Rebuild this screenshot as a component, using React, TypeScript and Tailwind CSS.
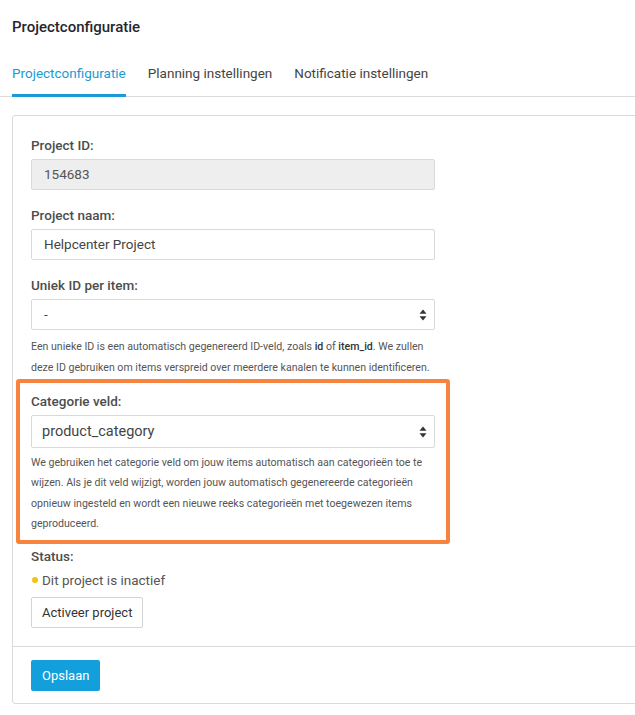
import { useState } from "react";

const tabs = ["Projectconfiguratie", "Planning instellingen", "Notificatie instellingen"];

function SortArrows() {
  return (
    <svg width="8" height="12" viewBox="0 0 8 12" className="shrink-0">
      <path d="M4 0.5 L7.5 4.8 H0.5 Z" fill="#333" />
      <path d="M4 11.5 L7.5 7.2 H0.5 Z" fill="#333" />
    </svg>
  );
}

interface SelectProps {
  value: string;
  large?: boolean;
}

function FakeSelect({ value, large }: SelectProps) {
  return (
    <div
      className={`flex items-center justify-between w-[404px] border border-[#d9d9d9] rounded-[2px] bg-white pr-[7px] ${
        large ? "h-[33px] text-[14.5px] pl-[10px]" : "h-[31px] text-[13.5px] pl-3"
      } text-[#444]`}
    >
      <span>{value}</span>
      <SortArrows />
    </div>
  );
}

function Label({ children }: { children: React.ReactNode }) {
  return (
    <div className="text-[13.5px] leading-[20px] font-medium text-[#4d4d4d] mb-[4px]">
      {children}
    </div>
  );
}

export default function App() {
  const [active, setActive] = useState(0);

  return (
    <div className="min-h-[715px] bg-white font-['Roboto',sans-serif] text-[#444] overflow-hidden">
      <h1 className="pl-3 pt-[17px] text-[15px] leading-[20px] font-medium text-[#26262e]">
        Projectconfiguratie
      </h1>

      <div className="mt-[26px] border-b border-[#dcdcdc] pl-3 flex gap-[22px]">
        {tabs.map((t, i) => (
          <button
            key={t}
            onClick={() => setActive(i)}
            className={`pb-[11px] text-[13.5px] leading-[20px] border-b-[3px] -mb-px ${
              active === i
                ? "text-[#1a9ad6] border-[#1a9ad6]"
                : "text-[#444] border-transparent"
            }`}
          >
            {t}
          </button>
        ))}
      </div>

      <div className="ml-3 mt-[18px] w-[640px] border border-[#dadada] rounded-[3px]">
        <div className="pl-[18px] pt-[19px] pb-[18px]">
          <Label>Project ID:</Label>
          <div className="w-[404px] h-[31px] flex items-center pl-3 border border-[#d9d9d9] rounded-[2px] bg-[#eeeeee] text-[13.5px] text-[#555]">
            154683
          </div>

          <div className="mt-[15px]">
            <Label>Project naam:</Label>
            <div className="w-[404px] h-[31px] flex items-center pl-3 border border-[#d9d9d9] rounded-[2px] bg-white text-[13.5px] text-[#444]">
              Helpcenter Project
            </div>
          </div>

          <div className="mt-[15px]">
            <Label>Uniek ID per item:</Label>
            <FakeSelect value="-" />
            <p className="mt-[6px] w-[404px] text-[10.6px] leading-[21px] text-[#555]">
              Een unieke ID is een automatisch gegenereerd ID-veld, zoals{" "}
              <span className="font-medium text-[#333]">id</span> of{" "}
              <span className="font-medium text-[#333]">item_id</span>. We zullen deze ID
              gebruiken om items verspreid over meerdere kanalen te kunnen identificeren.
            </p>
          </div>

          <div className="mt-[1px] -ml-[15px] w-[434px] border-4 border-[#f7843e] rounded-[3px] pl-[11px] pt-[8px] pb-[6px]">
            <Label>Categorie veld:</Label>
            <FakeSelect value="product_category" large />
            <p className="mt-[5px] w-[404px] text-[10.6px] leading-[20.3px] text-[#555]">
              We gebruiken het categorie veld om jouw items automatisch aan categorieën toe te
              wijzen. Als je dit veld wijzigt, worden jouw automatisch gegenereerde
              categorieën opnieuw ingesteld en wordt een nieuwe reeks categorieën met
              toegewezen items geproduceerd.
            </p>
          </div>

          <div className="mt-[2px]">
            <Label>Status:</Label>
            <div className="flex items-center gap-[4px] text-[13.5px] leading-[20px] text-[#555]">
              <span className="w-[6px] h-[6px] rounded-full bg-[#f5c211] ml-[1px]" />
              Dit project is inactief
            </div>
            <button className="mt-[7px] h-[31px] px-[10px] border border-[#d4d4d4] rounded-[2px] bg-white text-[13px] text-[#333]">
              Activeer project
            </button>
          </div>
        </div>

        <div className="border-t border-[#dadada] pl-[18px] pt-[13px] pb-[12px]">
          <button className="h-[31px] px-[11px] rounded-[2px] bg-[#129fdb] text-white text-[13px]">
            Opslaan
          </button>
        </div>
      </div>
    </div>
  );
}
